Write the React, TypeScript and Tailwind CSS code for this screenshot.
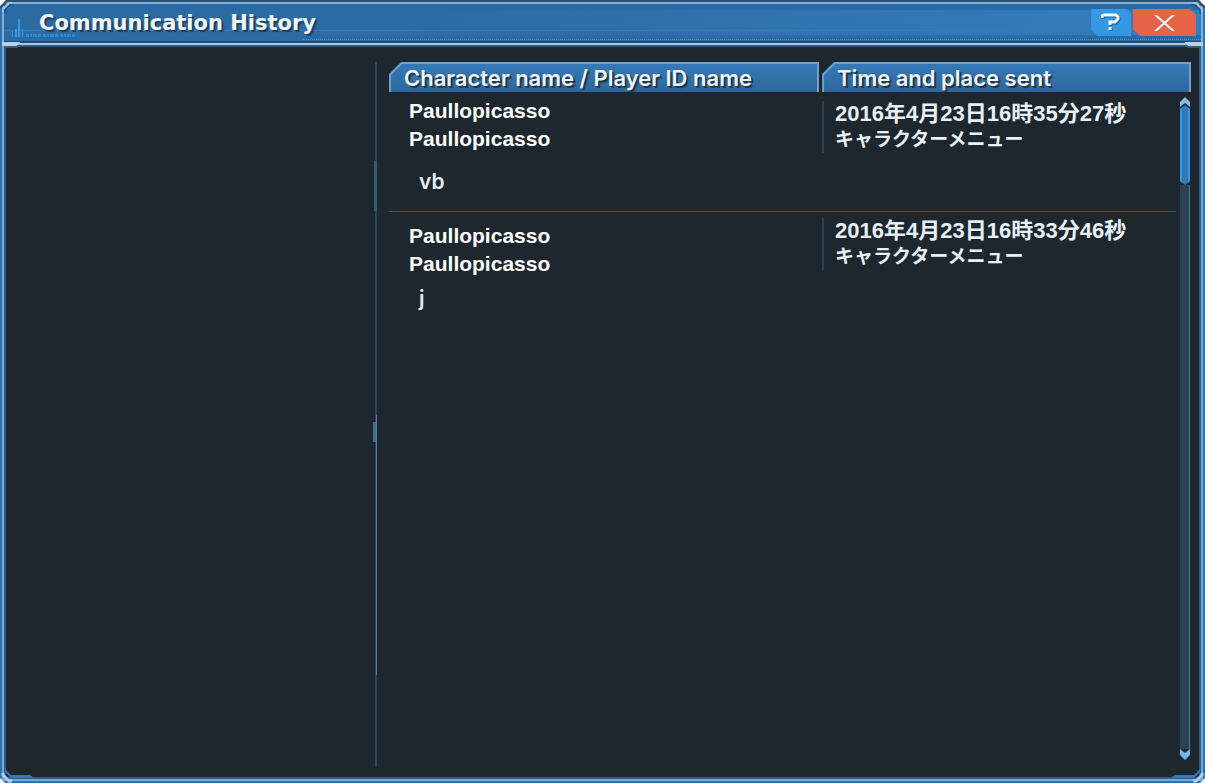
import React from "react";

type Message = {
  character: string;
  player: string;
  time: string;
  place: string;
  text: string;
  namePad: string;
};

const messages: Message[] = [
  {
    character: "Paullopicasso",
    player: "Paullopicasso",
    time: "2016年4月23日16時35分27秒",
    place: "キャラクターメニュー",
    text: "vb",
    namePad: "pt-[2px]",
  },
  {
    character: "Paullopicasso",
    player: "Paullopicasso",
    time: "2016年4月23日16時33分46秒",
    place: "キャラクターメニュー",
    text: "j",
    namePad: "pt-[10px]",
  },
];

function Emblem() {
  return (
    <svg className="absolute left-1 top-4 h-6 w-20" viewBox="0 0 80 24" aria-hidden="true">
      <g fill="#3399e6">
        <rect x="4" y="13" width="1" height="6" />
        <rect x="7" y="11" width="2" height="8" />
        <rect x="10" y="1" width="2" height="18" />
        <rect x="14" y="11" width="1" height="8" />
      </g>
      <path d="M18 17.500H69" stroke="#3390d8" strokeWidth="3" strokeDasharray="3 1 2 1 4 1 3 2" opacity="0.8" />
    </svg>
  );
}

function TopCorner({ className }: { className: string }) {
  return (
    <svg className={`pointer-events-none absolute top-0 z-10 ${className}`} width="24" height="50" viewBox="0 0 24 50" fill="none" aria-hidden="true">
      <path d="M0 0H6L0 6Z" fill="#ffffff" />
      <path d="M0 8L8 0" stroke="#31506c" strokeWidth="2" />
      <path d="M3 12V9L9 3H12" stroke="#9fc2e0" strokeWidth="2" />
      <path d="M5 14V10L10 5H14" stroke="#244868" strokeWidth="1" />
      <path d="M2 42H20V44L17 46H2Z" fill="#b9d0e5" />
      <path d="M5 47H17L20 45" stroke="#355a7b" strokeWidth="2" />
    </svg>
  );
}

function BottomCorner({ className }: { className: string }) {
  return (
    <svg className={`pointer-events-none absolute bottom-0 z-10 ${className}`} width="36" height="20" viewBox="0 0 36 20" fill="none" aria-hidden="true">
      <path d="M0 15L5 20H0Z" fill="#ffffff" />
      <path d="M5 6L11 12H30L34 15H11L5 9Z" fill="#3679b5" />
      <path d="M3 10V12L9 18H12" stroke="#b3cde4" strokeWidth="3" />
    </svg>
  );
}

function HeaderTab({ label, width }: { label: string; width: string }) {
  return (
    <th scope="col" className={`p-0 pb-[3px] text-left font-normal ${width}`}>
      <div className="mr-[3px] bg-[#6da2cf] px-[2px] pt-[2px] [clip-path:polygon(0_12px,12px_0,100%_0,100%_100%,0_100%)]">
        <div className="flex h-7 items-center bg-gradient-to-b from-[#3579b8] to-[#2d6798] pl-[13px] text-[22px] leading-7 font-semibold whitespace-nowrap text-[#eef4fa] [clip-path:polygon(0_11px,11px_0,100%_0,100%_100%,0_100%)] [text-shadow:2px_2px_1px_#1e3448]">
          {label}
        </div>
      </div>
    </th>
  );
}

export default function App() {
  return (
    <div className="relative flex min-h-screen flex-col bg-[#2f73ae] px-[2px] pb-[2px] font-['Inter','Noto_Sans_CJK_JP',sans-serif] text-white">
      <TopCorner className="left-0" />
      <TopCorner className="right-0 -scale-x-100" />
      <BottomCorner className="left-0" />
      <BottomCorner className="right-0 -scale-x-100" />
      <header className="relative flex h-[45px] shrink-0 items-center justify-between border-x-2 border-t-2 border-b-2 border-[#7fb0db] border-t-[#31506c] border-b-[#a9c9e6] bg-[#2c6aa3] pl-[35px] pr-[5px]">
        <div className="absolute inset-x-0 top-0 h-[2px] bg-[#7db0dc]" />
        <div className="absolute inset-x-0 bottom-0 h-[2px] bg-[#254a6c]" />
        <div className="absolute inset-x-0 bottom-3 h-px bg-[#3379b9]" />
        <div className="absolute inset-y-2 right-0 w-2/3 bg-gradient-to-r from-transparent to-[#347ebd]" />
        <div className="absolute right-0 bottom-[3px] w-3/4 border-b border-dotted border-[#3498e4]" />
        <Emblem />
        <h1 className="relative font-['DejaVu_Sans',sans-serif] text-[21px] leading-7 font-bold text-[#f0f5fa] [text-shadow:2px_2px_1px_#1e3e5e]">
          Communication History
        </h1>
        <div className="relative flex gap-[2px]">
          <button
            type="button"
            aria-label="Help"
            className="flex h-[27px] w-10 items-center justify-center bg-[#3498e4] [clip-path:polygon(0_0,36px_0,100%_4px,100%_100%,6px_100%,0_20px)]"
          >
            <svg width="20" height="19" viewBox="0 0 20 19" fill="none" aria-hidden="true">
              <path d="M2 6V4L4 3H16L18 5V7L15 10H10V13M10 15V18" stroke="#23608f" strokeWidth="3" />
              <path d="M1 5V3L3 2H15L17 4V6L14 9H9V12M9 14V17" stroke="#f2f8fd" strokeWidth="3" />
            </svg>
          </button>
          <button
            type="button"
            aria-label="Close"
            className="flex h-[27px] w-[63px] items-center justify-center bg-[#e56346] [clip-path:polygon(0_0,57px_0,100%_6px,100%_100%,7px_100%,0_20px)]"
          >
            <svg width="24" height="20" viewBox="0 0 24 20" fill="none" aria-hidden="true">
              <path d="M1 2H4L22 18H19ZM19 2H22L4 18H1Z" fill="#f5f8fb" />
            </svg>
          </button>
        </div>
      </header>

      <div className="flex flex-1 border-x-2 border-b-2 border-[#75aad8]">
        <main className="relative flex flex-1 border-2 border-[#355a7b] bg-[#1e262e] pt-[15px] pr-[5px] pb-[10px] pl-1">
          <aside className="relative w-[31%] border-r-2 border-[#2b475f]" aria-label="Contacts">
            <div className="absolute top-[14%] -right-[2px] h-[50px] w-[3px] bg-[#35597a]" />
            <div className="absolute top-[51%] -right-[2px] h-5 w-1 bg-[#416d94]" />
            <div className="absolute top-1/2 -right-[2px] bottom-[13%] w-px bg-[#4d7da8]" />
          </aside>
          <section className="relative ml-3 flex-1">
            <table className="w-full table-fixed border-separate border-spacing-0">
              <thead>
                <tr>
                  <HeaderTab label="Character name / Player ID name" width="w-[53.8%]" />
                  <HeaderTab label="Time and place sent" width="w-[46.2%]" />
                </tr>
              </thead>
              {messages.map((m, i) => (
                <tbody key={m.time}>
                  <tr className="h-[69px] align-top">
                    <td className={`p-0 pl-5 font-['Liberation_Sans',sans-serif] text-[21px] leading-7 font-bold ${m.namePad}`}>
                      <div>{m.character}</div>
                      <div>{m.player}</div>
                    </td>
                    <td className="p-0 pt-[6px] font-['Liberation_Sans','Noto_Sans_CJK_JP',sans-serif] leading-[26px] font-bold whitespace-nowrap text-[#e8f0f7]">
                      <div className="border-l-2 border-[#2b4256] pl-[11px] text-[22px]">{m.time}</div>
                      <div className="border-l-2 border-[#2b4256] pl-[11px] text-[19px]">{m.place}</div>
                    </td>
                  </tr>
                  <tr className="h-12 align-top">
                    <td
                      colSpan={2}
                      className={`p-0 pt-1 pl-[30px] text-[21px] leading-7 font-semibold text-[#e4edf5] ${
                        i < messages.length - 1 ? "border-b border-[#2f5878]" : ""
                      }`}
                    >
                      {m.text}
                    </td>
                  </tr>
                </tbody>
              ))}
            </table>
            <div className="absolute top-[35px] right-0 bottom-[6px] w-[18px] bg-[#1e262e] pl-1">
              <div className="flex h-full w-[10px] flex-col items-center">
                <svg width="10" height="11" viewBox="0 0 10 11" className="shrink-0" aria-hidden="true">
                  <path d="M5 0L10 5V10L5 6L0 10V5Z" fill="#86b9e6" />
                </svg>
                <div className="-mt-[3px] h-20 w-full shrink-0 border-x-2 border-[#3498e4] bg-[#3379b9] [clip-path:polygon(0_4px,50%_0,100%_4px,100%_76px,50%_100%,0_76px)]" />
                <div className="w-full flex-1 border-r border-[#487297] bg-[#2b4256]" />
                <svg width="10" height="12" viewBox="0 0 10 12" className="shrink-0" aria-hidden="true">
                  <path d="M0 0L5 4L10 0V6L5 11L0 6Z" fill="#72b6ee" />
                </svg>
              </div>
            </div>
          </section>
        </main>
      </div>
    </div>
  );
}
